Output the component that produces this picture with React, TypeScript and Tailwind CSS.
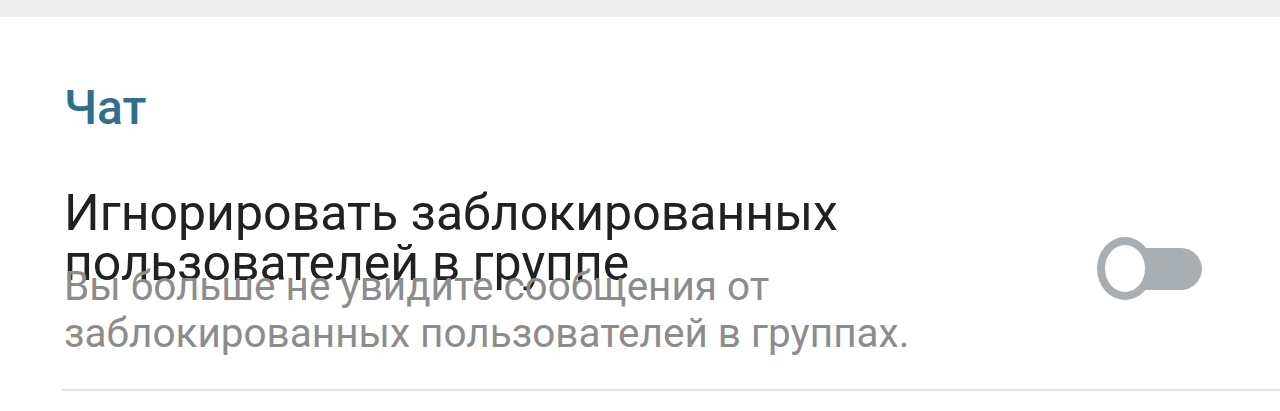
import React from "react";

export default function App() {
  return (
    <div className="w-[1280px] h-[411px] bg-white overflow-hidden" style={{ fontFamily: "Roboto, 'Noto Sans', sans-serif" }}>
      <div className="h-[17px] bg-[#efefef]" />
      <div className="pl-[64px] pt-[63px]">
        <div className="text-[48px] leading-[56px] font-medium text-[#316f8d]">Чат</div>
      </div>
      <div className="flex pl-[64px] pt-[52px]">
        <div className="flex-1">
          <div className="text-[50px] leading-[50px] text-[#212121] w-[900px]">
            Игнорировать заблокированных пользователей в группе
          </div>
          <div className="text-[40.5px] leading-[47px] text-[#8c8c8c] mt-[-25px] w-[880px]">
            Вы больше не увидите сообщения от заблокированных пользователей в группах.
          </div>
        </div>
        <div className="relative w-[105px] h-[63px] mt-[49px] mr-[78px]">
          <div className="absolute left-[8px] right-0 top-[11px] h-[42px] rounded-full bg-[#a9aeb2]" />
          <div className="absolute left-0 top-0 w-[56px] h-[63px] rounded-[50%] bg-white border-[8px] border-[#a9aeb2]" />
        </div>
      </div>
      <div className="ml-[62px] mt-[32px] h-[2px] bg-[#e3e3e3]" />
    </div>
  );
}
